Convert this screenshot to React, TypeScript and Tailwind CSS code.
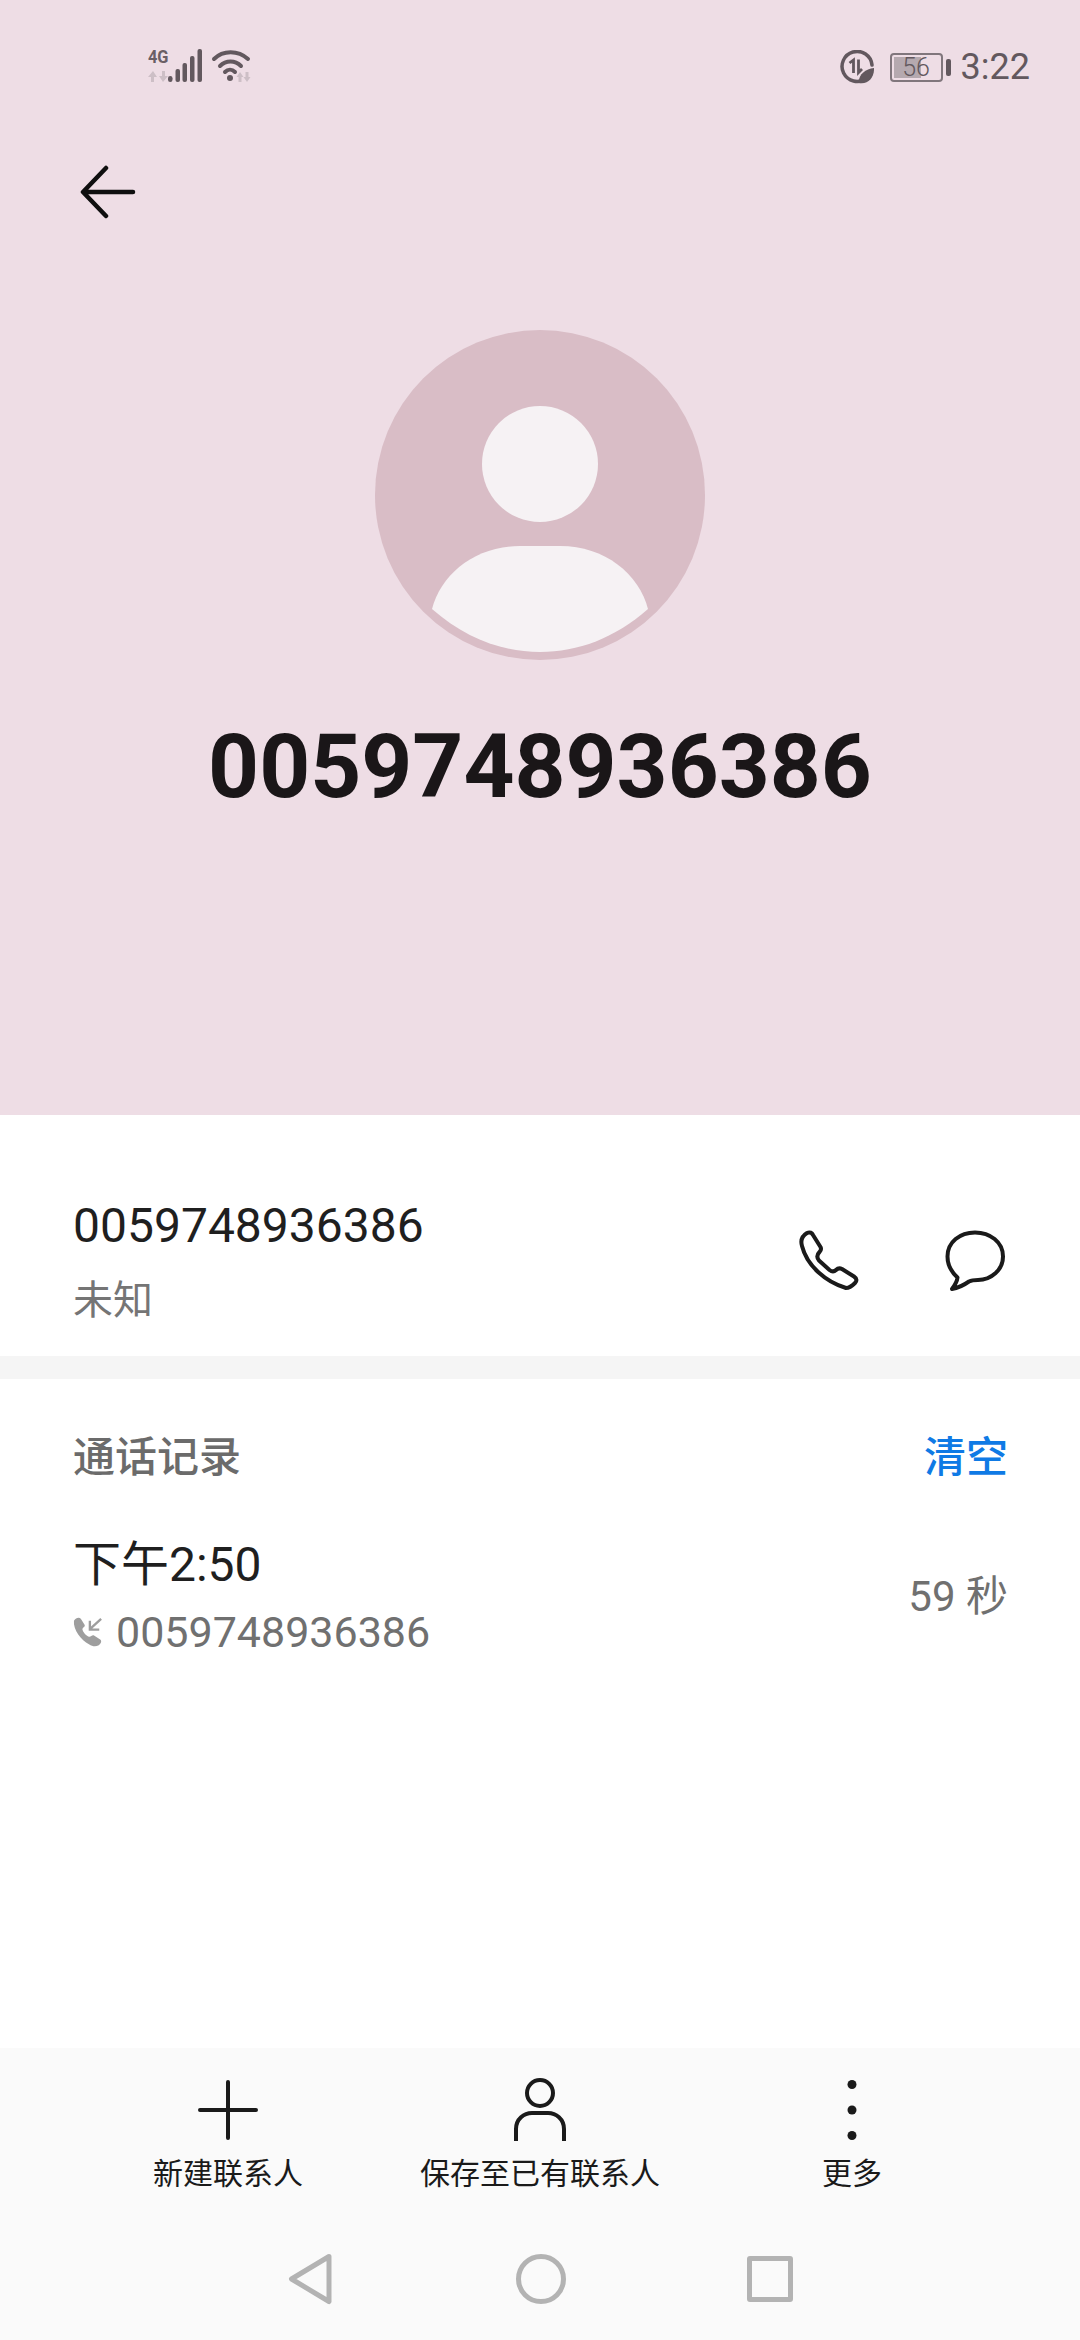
import React from "react";

const FONT = { fontFamily: 'Roboto, "Noto Sans CJK SC", sans-serif' };

function Signal() {
  return (
    <div className="relative mb-[3px] h-[34px] w-[104px]">
      <span className="absolute top-[-1px] left-0 origin-top-left scale-x-[0.86] text-[19px] leading-[17px] font-bold whitespace-nowrap text-[#6a5f65]">4G</span>
      <svg className="block" width="104" height="34" viewBox="0 0 104 34" fill="none">
        <path d="M5 22l-5 6h3v5h3v-5h3zM15 33l5-6h-3v-5h-3v5h-3z" fill="#cdbfc6" />
        <g fill="#62585e">
          <rect x="20" y="27" width="4.500" height="6" rx="2.200" />
          <rect x="27.500" y="20" width="4.500" height="13" rx="2" />
          <rect x="34.500" y="14" width="4.500" height="19" rx="2" />
          <rect x="42" y="7" width="4.500" height="26" rx="2" />
          <rect x="49.500" y="0" width="4.500" height="33" rx="2" />
        </g>
        <path d="M66 10C75 1 90 1 100 10" stroke="#62585e" strokeWidth="4" strokeLinecap="round" />
        <path d="M72 17C78 11 87 11 93 17" stroke="#62585e" strokeWidth="4" strokeLinecap="round" />
        <path d="M77 23C80 20 84 20 87 23" stroke="#62585e" strokeWidth="4" strokeLinecap="round" />
        <circle cx="82" cy="29" r="3" fill="#62585e" />
        <path d="M92 23l-3.500 5h2v5h3v-5h2zM99 33l3.500-5h-2v-5h-3v5h-2z" fill="#cdbfc6" />
      </svg>
    </div>
  );
}

function Saver() {
  return (
    <svg width="34" height="34" viewBox="0 0 34 34" fill="none">
      <path d="M26 28.500A15 15 0 1 1 32 15" stroke="#62585e" strokeWidth="3.500" strokeLinecap="round" />
      <path d="M9.500 13l4-3v13" stroke="#62585e" strokeWidth="2.800" />
      <path d="M18.500 9.500v13l3.500-3.500" stroke="#62585e" strokeWidth="2.800" />
      <path d="M19 33C18 25 25 19 34 18C34.500 27 28 35 19 33Z" fill="#62585e" />
    </svg>
  );
}

function Battery() {
  return (
    <div className="flex items-center gap-[3px]">
      <div className="relative flex h-[29px] w-[53px] items-center justify-center overflow-hidden rounded-[4px] border-2 border-[#80767c]">
        <div className="absolute inset-y-[2px] left-[2px] w-[27px] bg-[#b5a9af]" />
        <span className="relative text-[25px] leading-none font-light text-[#62585e]">56</span>
      </div>
      <div className="h-[17px] w-[5px] rounded-[2px] bg-[#62585e]" />
    </div>
  );
}

function Avatar() {
  return (
    <div className="flex h-[330px] w-[330px] flex-col items-center overflow-hidden rounded-full bg-[#d9bdc6]">
      <div className="mt-[76px] h-[116px] w-[116px] shrink-0 rounded-full bg-[#f6f2f4]" />
      <svg className="mt-[24px] shrink-0" width="330" height="110" viewBox="0 0 330 110">
        <path d="M57 63C66 28 100 0 145 0H185C230 0 264 28 273 63C240 92 203 106 165 106C127 106 90 92 57 63Z" fill="#f6f2f4" />
      </svg>
    </div>
  );
}

function PhoneOutline() {
  return (
    <svg width="60" height="60" viewBox="0 0 60 60" fill="none">
      <path
        d="M3 16C1.500 11 3 6 8 3C11 1.500 13 3 14 5L21.500 17C22.500 19 22 20.500 20.500 22C17.500 25 18 28 20 30.500L30.500 40C33 42 35 42 37 40C39 38 41 38 43 39L55 46.500C58 48.500 58 51 56 53C53 56 50 58 47 58C27 52 8 36 3 16Z"
        stroke="#1a1a1a"
        strokeWidth="4"
        strokeLinejoin="round"
      />
    </svg>
  );
}

function Bubble() {
  return (
    <svg width="60" height="61" viewBox="0 0 60 61" fill="none">
      <path
        d="M30 2.500C45 2.500 58 12 58 26.500C58 40 46 50 33 50C30 50 27 50 24 51.500C19 55 13 58 7 59C10 55 12 52 12.500 47.500C7 42.500 2.500 35 2.500 26.500C2.500 12 15 2.500 30 2.500Z"
        stroke="#1a1a1a"
        strokeWidth="4"
        strokeLinejoin="round"
      />
    </svg>
  );
}

function IncomingCall() {
  return (
    <svg width="30" height="30" viewBox="0 0 32 32" fill="none">
      <path d="M1 4C3 0.500 7 0 8.500 2L12.500 8.500C13 10.500 10.500 11 10 13C10.500 16 14 20 17 21C19 21.500 20 19 22 19.500L29 24C31 25.500 30 28.500 27.500 30C24 32 21 31.500 17 29C9 25 0 14 1 4Z" fill="#9e9e9e" />
      <path d="M30 2L18 13M18 4V13.500H28" stroke="#9e9e9e" strokeWidth="2.500" />
    </svg>
  );
}

function Action({ label, icon }: { label: string; icon: React.ReactNode }) {
  return (
    <div className="flex w-[312px] flex-col items-center">
      <div className="flex h-[68px] items-center justify-center">{icon}</div>
      <span className="mt-[8px] text-[30px] leading-[44px] whitespace-nowrap text-[#1a1a1a]">{label}</span>
    </div>
  );
}

export default function App() {
  return (
    <div className="flex h-[2340px] w-[1080px] flex-col overflow-hidden bg-white" style={FONT}>
      <header className="flex h-[1115px] shrink-0 flex-col bg-[#eedde5]">
        <div className="flex items-center justify-between pt-[46px] pr-[50px] pl-[148px]">
          <Signal />
          <div className="flex items-center">
            <Saver />
            <div className="mr-[10px] ml-[16px]">
              <Battery />
            </div>
            <span className="text-[36px] leading-[42px] text-[#62585e]">3:22</span>
          </div>
        </div>
        <div className="mt-[77px] pl-[78px]">
          <svg className="block" width="60" height="56" viewBox="0 0 60 56" fill="none">
            <path d="M55 27H6M28 3L5 27L28 51" stroke="#0f0f0f" strokeWidth="4.500" strokeLinecap="round" strokeLinejoin="round" />
          </svg>
        </div>
        <div className="mt-[109px] flex justify-center">
          <Avatar />
        </div>
        <h1 className="mt-[55px] text-center text-[89px] leading-[104px] font-bold text-[#1a1618]">0059748936386</h1>
      </header>

      <section className="flex h-[241px] shrink-0 items-start justify-between pt-[77px] pr-[75px] pl-[73px]">
        <div>
          <div className="text-[48px] leading-[68px] text-[#1f1f1f]">0059748936386</div>
          <div className="mt-[13px] text-[40px] leading-[56px] text-[#757575]">未知</div>
        </div>
        <div className="mt-[38px] flex items-start gap-[86px]">
          <PhoneOutline />
          <Bubble />
        </div>
      </section>

      <div className="h-[23px] shrink-0 bg-[#f5f5f5]" />

      <section className="flex-1 pr-[72px] pl-[73px]">
        <div className="flex items-center justify-between pt-[51px]">
          <span className="text-[42px] leading-[56px] font-medium text-[#6b6b6b]">通话记录</span>
          <span className="text-[42px] leading-[56px] font-medium text-[#0f7ae5]">清空</span>
        </div>
        <div className="mt-[44px] flex items-center justify-between">
          <div>
            <div className="text-[48px] leading-[70px] text-[#1f1f1f]">下午2:50</div>
            <div className="mt-[4px] flex items-center gap-[13px]">
              <IncomingCall />
              <span className="text-[43px] leading-[56px] text-[#707070]">0059748936386</span>
            </div>
          </div>
          <span className="pt-[3px] text-[42px] leading-[56px] text-[#707070]">59 秒</span>
        </div>
      </section>

      <footer className="flex h-[292px] shrink-0 flex-col bg-[#fafafa]">
        <div className="flex justify-center pt-[28px]">
          <Action
            label="新建联系人"
            icon={
              <svg width="60" height="60" viewBox="0 0 60 60" fill="none">
                <path d="M30 2V58M2 30H58" stroke="#1a1a1a" strokeWidth="4" strokeLinecap="round" />
              </svg>
            }
          />
          <Action
            label="保存至已有联系人"
            icon={
              <svg width="56" height="64" viewBox="0 0 56 64" fill="none">
                <circle cx="28" cy="15" r="13" stroke="#1a1a1a" strokeWidth="4" />
                <path d="M4 63V51C4 41 12 35 20 35H36C44 35 52 41 52 51V63" stroke="#1a1a1a" strokeWidth="4" />
              </svg>
            }
          />
          <Action
            label="更多"
            icon={
              <svg width="12" height="62" viewBox="0 0 12 62" fill="#1a1a1a">
                <circle cx="6" cy="5.500" r="4.500" />
                <circle cx="6" cy="31" r="4.500" />
                <circle cx="6" cy="56.500" r="4.500" />
              </svg>
            }
          />
        </div>
        <div className="mt-[57px] flex items-center justify-center gap-[181px]">
          <svg className="mr-[3px]" width="44" height="52" viewBox="0 0 44 52" fill="none">
            <path d="M41 3.500L3.500 26L41 48.500Z" stroke="#b3b3b3" strokeWidth="5" strokeLinejoin="round" />
          </svg>
          <div className="h-[50px] w-[50px] rounded-full border-[5px] border-[#b3b3b3]" />
          <div className="h-[46px] w-[46px] rounded-[3px] border-[5px] border-[#b3b3b3]" />
        </div>
      </footer>
    </div>
  );
}
